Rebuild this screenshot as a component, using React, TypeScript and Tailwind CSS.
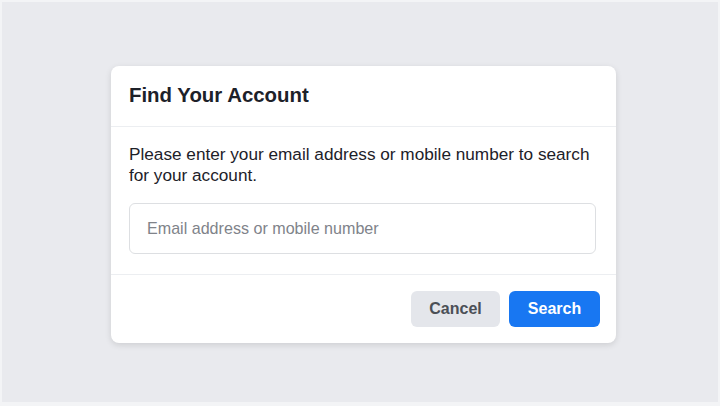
import React from 'react';

const App: React.FC = () => {
  return (
    <div className="w-[720px] h-[406px] bg-[#e9eaee] border-t-2 border-l-2 border-r-2 border-b-4 border-[#f3f4f6] flex items-center justify-center font-['Liberation_Sans',Arial,sans-serif]">
      <div className="w-[505px] ml-[7px] mt-[4px] bg-white rounded-lg shadow-[0_2px_6px_rgba(0,0,0,0.12)]">
        {/* Header */}
        <div className="h-[61px] px-[18px] flex items-center border-b border-[#eceef1]">
          <h2 className="text-[20.4px] font-bold text-[#1d2129]">Find Your Account</h2>
        </div>

        {/* Body */}
        <div className="px-[18px] pt-[17px] pb-[20px] border-b border-[#eceef1]">
          <p className="text-[17.2px] leading-[21px] text-[#1d2129] pr-[6px]">
            Please enter your email address or mobile number to search for your account.
          </p>
          <div className="mt-[17px] mr-[2px] h-[51px] rounded-md border border-[#dddfe2] flex items-center px-[17px]">
            <input
              type="text"
              placeholder="Email address or mobile number"
              className="w-full outline-none text-[16.1px] text-[#1d2129] placeholder:text-[#80838a] bg-transparent"
            />
          </div>
        </div>

        {/* Footer */}
        <div className="flex justify-end gap-[9px] px-[16px] pt-[16px] pb-[16px]">
          <button className="w-[89px] h-[36px] rounded-md bg-[#e4e6eb] text-[#4b4f56] text-[16px] font-bold">
            Cancel
          </button>
          <button className="w-[91px] h-[36px] rounded-md bg-[#1877f2] text-white text-[16px] font-bold">
            Search
          </button>
        </div>
      </div>
    </div>
  );
};

export default App;
